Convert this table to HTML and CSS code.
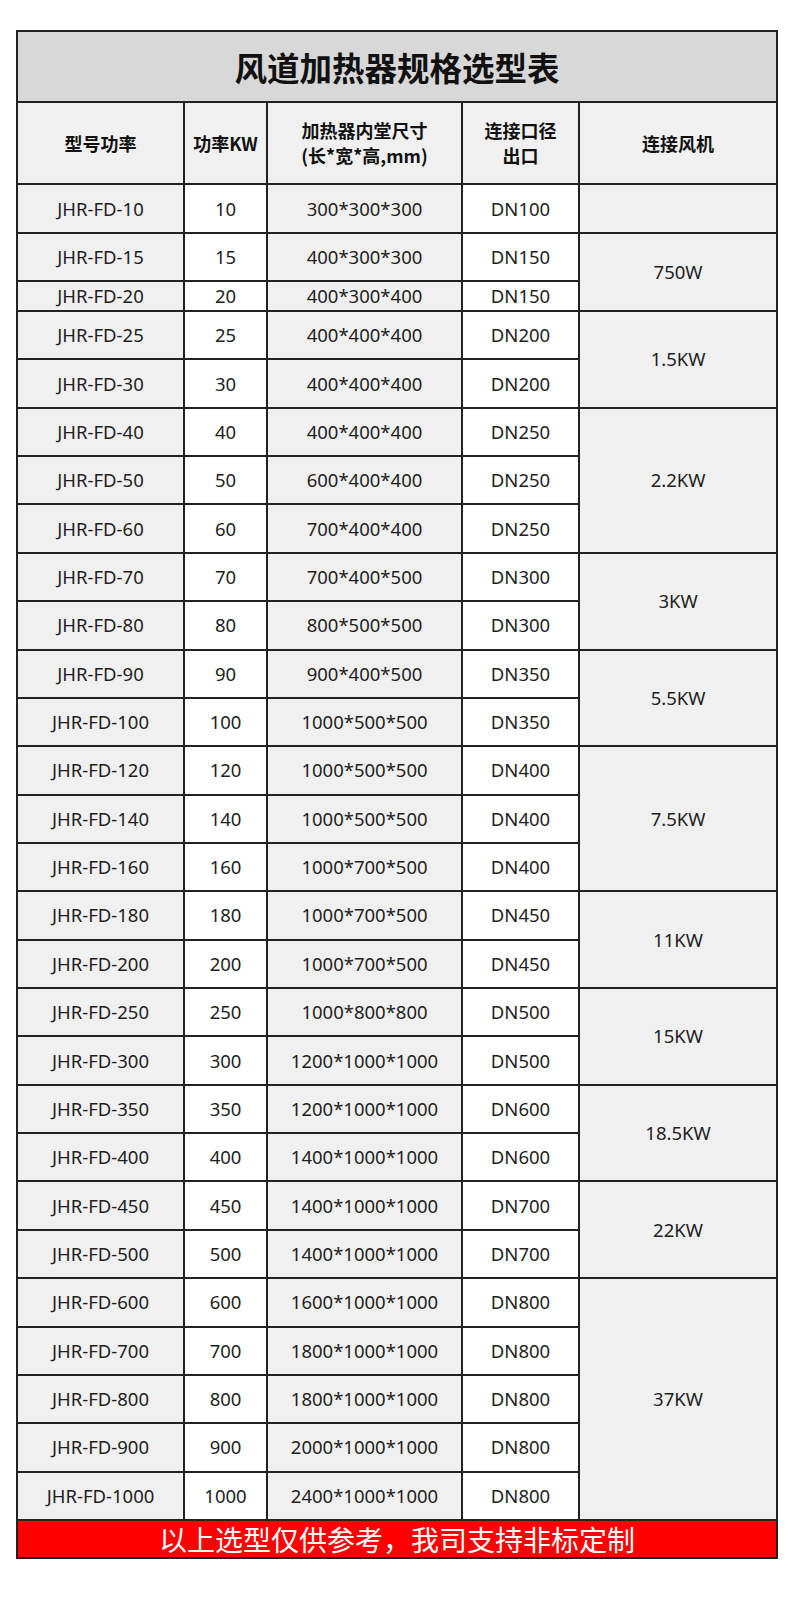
FILE: index.html
```html
<!DOCTYPE html>
<html lang="zh-CN">
<head>
<meta charset="utf-8">
<title>风道加热器规格选型表</title>
<link rel="stylesheet" href="styles.css">
</head>
<body>
<div class="page">
<table class="spec">
<colgroup>
<col class="c1"><col class="c2"><col class="c3"><col class="c4"><col class="c5">
</colgroup>
<thead>
<tr class="title-row"><th colspan="5" class="title">风道加热器规格选型表</th></tr>
<tr class="head-row">
<th>型号功率</th>
<th>功率KW</th>
<th>加热器内堂尺寸<br>(长*宽*高,mm)</th>
<th>连接口径<br>出口</th>
<th>连接风机</th>
</tr>
</thead>
<tbody>
<tr class="r49"><td class="g">JHR-FD-10</td><td>10</td><td class="g">300*300*300</td><td>DN100</td><td class="g"></td></tr>
<tr class="r48"><td class="g">JHR-FD-15</td><td>15</td><td class="g">400*300*300</td><td>DN150</td><td class="g" rowspan="2">750W</td></tr>
<tr class="r30"><td class="g">JHR-FD-20</td><td>20</td><td class="g">400*300*400</td><td>DN150</td></tr>
<tr class="r"><td class="g">JHR-FD-25</td><td>25</td><td class="g">400*400*400</td><td>DN200</td><td class="g" rowspan="2">1.5KW</td></tr>
<tr class="r"><td class="g">JHR-FD-30</td><td>30</td><td class="g">400*400*400</td><td>DN200</td></tr>
<tr class="r"><td class="g">JHR-FD-40</td><td>40</td><td class="g">400*400*400</td><td>DN250</td><td class="g" rowspan="3">2.2KW</td></tr>
<tr class="r"><td class="g">JHR-FD-50</td><td>50</td><td class="g">600*400*400</td><td>DN250</td></tr>
<tr class="r"><td class="g">JHR-FD-60</td><td>60</td><td class="g">700*400*400</td><td>DN250</td></tr>
<tr class="r"><td class="g">JHR-FD-70</td><td>70</td><td class="g">700*400*500</td><td>DN300</td><td class="g" rowspan="2">3KW</td></tr>
<tr class="r"><td class="g">JHR-FD-80</td><td>80</td><td class="g">800*500*500</td><td>DN300</td></tr>
<tr class="r"><td class="g">JHR-FD-90</td><td>90</td><td class="g">900*400*500</td><td>DN350</td><td class="g" rowspan="2">5.5KW</td></tr>
<tr class="r"><td class="g">JHR-FD-100</td><td>100</td><td class="g">1000*500*500</td><td>DN350</td></tr>
<tr class="r"><td class="g">JHR-FD-120</td><td>120</td><td class="g">1000*500*500</td><td>DN400</td><td class="g" rowspan="3">7.5KW</td></tr>
<tr class="r"><td class="g">JHR-FD-140</td><td>140</td><td class="g">1000*500*500</td><td>DN400</td></tr>
<tr class="r"><td class="g">JHR-FD-160</td><td>160</td><td class="g">1000*700*500</td><td>DN400</td></tr>
<tr class="r"><td class="g">JHR-FD-180</td><td>180</td><td class="g">1000*700*500</td><td>DN450</td><td class="g" rowspan="2">11KW</td></tr>
<tr class="r"><td class="g">JHR-FD-200</td><td>200</td><td class="g">1000*700*500</td><td>DN450</td></tr>
<tr class="r"><td class="g">JHR-FD-250</td><td>250</td><td class="g">1000*800*800</td><td>DN500</td><td class="g" rowspan="2">15KW</td></tr>
<tr class="r"><td class="g">JHR-FD-300</td><td>300</td><td class="g">1200*1000*1000</td><td>DN500</td></tr>
<tr class="r"><td class="g">JHR-FD-350</td><td>350</td><td class="g">1200*1000*1000</td><td>DN600</td><td class="g" rowspan="2">18.5KW</td></tr>
<tr class="r"><td class="g">JHR-FD-400</td><td>400</td><td class="g">1400*1000*1000</td><td>DN600</td></tr>
<tr class="r"><td class="g">JHR-FD-450</td><td>450</td><td class="g">1400*1000*1000</td><td>DN700</td><td class="g" rowspan="2">22KW</td></tr>
<tr class="r"><td class="g">JHR-FD-500</td><td>500</td><td class="g">1400*1000*1000</td><td>DN700</td></tr>
<tr class="r"><td class="g">JHR-FD-600</td><td>600</td><td class="g">1600*1000*1000</td><td>DN800</td><td class="g" rowspan="5">37KW</td></tr>
<tr class="r"><td class="g">JHR-FD-700</td><td>700</td><td class="g">1800*1000*1000</td><td>DN800</td></tr>
<tr class="r"><td class="g">JHR-FD-800</td><td>800</td><td class="g">1800*1000*1000</td><td>DN800</td></tr>
<tr class="r"><td class="g">JHR-FD-900</td><td>900</td><td class="g">2000*1000*1000</td><td>DN800</td></tr>
<tr class="r"><td class="g">JHR-FD-1000</td><td>1000</td><td class="g">2400*1000*1000</td><td>DN800</td></tr>
</tbody>
<tfoot>
<tr class="foot-row"><td colspan="5" class="foot">以上选型仅供参考，我司支持非标定制</td></tr>
</tfoot>
</table>
</div>
</body>
</html>
```
FILE: styles.css
```css
html, body {
  margin: 0;
  padding: 0;
  background: #ffffff;
}
.page {
  padding: 30px 0 0 16px;
  height: 1568px;
}
.spec {
  border-collapse: separate;
  border-spacing: 0;
  table-layout: fixed;
  width: 762px;
  border-top: 2px solid #222;
  border-left: 2px solid #222;
  font-family: "Noto Sans", "Noto Sans CJK SC", sans-serif;
  color: #1e1e1e;
}
.c1 { width: 167px; }
.c2 { width: 83px; }
.c3 { width: 195px; }
.c4 { width: 117px; }
.c5 { width: 198px; }
.spec th, .spec td {
  box-sizing: border-box;
  border-right: 2px solid #222;
  border-bottom: 2px solid #222;
  padding: 0;
  text-align: center;
  vertical-align: middle;
  background: #ffffff;
}
.spec td {
  font-size: 18.5px;
  font-weight: 400;
  line-height: 24px;
}
.spec td.g {
  background: #f0f0f0;
}
.title-row { height: 71px; }
.spec th.title {
  background: #d8d8d8;
  font-family: "Noto Sans CJK SC", sans-serif;
  font-size: 32.5px;
  font-weight: 700;
  color: #111;
  line-height: 40px;
}
.head-row { height: 82px; }
.head-row th {
  background: #f0f0f0;
  font-family: "Noto Sans CJK SC", "Noto Sans", sans-serif;
  font-size: 18px;
  font-weight: 700;
  line-height: 25px;
  color: #111;
}
.r49 { height: 49px; }
.r48 { height: 48px; }
.r30 { height: 30px; }
.r { height: 48.36px; }
.foot-row { height: 38px; }
.spec td.foot {
  background: #ff0000;
  color: #ffffff;
  font-family: "Noto Sans CJK SC", sans-serif;
  font-size: 28px;
  line-height: 34px;
  font-weight: 400;
}
```
